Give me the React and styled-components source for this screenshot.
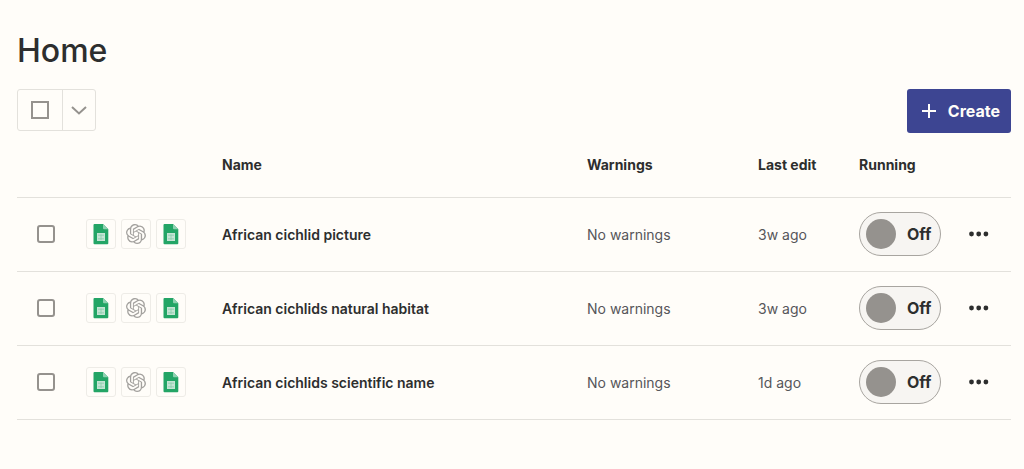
import { useState } from "react";
import styled, { createGlobalStyle } from "styled-components";
import { SiOpenai } from "react-icons/si";

const ZAP_LIST = [
  { id: 1, name: "African cichlid picture", warnings: "No warnings", lastEdit: "3w ago" },
  { id: 2, name: "African cichlids natural habitat", warnings: "No warnings", lastEdit: "3w ago" },
  { id: 3, name: "African cichlids scientific name", warnings: "No warnings", lastEdit: "1d ago" },
];

const SheetsIcon = () => (
  <svg width="16" height="22" viewBox="0 0 16 22" aria-hidden="true">
    <path d="M1.5 1H10l5.3 5.3v14a1 1 0 0 1-1 1H1.5a1 1 0 0 1-1-1V2a1 1 0 0 1 1-1z" fill="#23a566" />
    <path d="M10 1l5.3 5.3H11a1 1 0 0 1-1-1z" fill="#8ed1b1" />
    <rect x="4" y="10" width="8" height="8" fill="#c4e4d4" />
    <path d="M5 12.2h6M5 15.8h6M8 11.5v5.5" stroke="#8ccdad" strokeWidth="0.8" />
  </svg>
);

const ZapRow = ({ name, warnings, lastEdit }) => {
  const [isOn, setIsOn] = useState(false);

  return (
    <St.Row>
      <St.CheckCell>
        <St.Checkbox type="checkbox" aria-label={`Select ${name}`} />
      </St.CheckCell>
      <td>
        <St.AppList>
          <St.AppBox>
            <SheetsIcon />
          </St.AppBox>
          <St.AppBox>
            <SiOpenai size={20} />
          </St.AppBox>
          <St.AppBox>
            <SheetsIcon />
          </St.AppBox>
        </St.AppList>
      </td>
      <td>
        <St.NameLink href="#">{name}</St.NameLink>
      </td>
      <St.TextCell>{warnings}</St.TextCell>
      <St.TextCell>{lastEdit}</St.TextCell>
      <td>
        <St.Switch>
          <St.SwitchInput
            type="checkbox"
            role="switch"
            checked={isOn}
            onChange={() => setIsOn(!isOn)}
          />
          {isOn ? "On" : "Off"}
        </St.Switch>
      </td>
      <td>
        <St.MoreBtn type="button" aria-label="More actions">
          <svg width="20" height="6" viewBox="0 0 20 6" fill="#2d2e2e">
            <circle cx="2.5" cy="3" r="2.4" />
            <circle cx="9.7" cy="3" r="2.4" />
            <circle cx="16.9" cy="3" r="2.4" />
          </svg>
        </St.MoreBtn>
      </td>
    </St.Row>
  );
};

const App = () => {
  return (
    <St.Page>
      <GlobalStyle />
      <St.Title>Home</St.Title>

      <St.Toolbar>
        <St.SelectGroup>
          <St.SelectAllLabel>
            <St.SelectAll type="checkbox" aria-label="Select all" />
          </St.SelectAllLabel>
          <St.SelectMenuBtn type="button" aria-label="Selection options">
            <svg width="16" height="10" viewBox="0 0 16 10" fill="none">
              <path d="M1 2L8 8.5 15 2" stroke="#95928e" strokeWidth="2" />
            </svg>
          </St.SelectMenuBtn>
        </St.SelectGroup>
        <St.CreateBtn type="button">
          <svg width="16" height="16" viewBox="0 0 16 16" aria-hidden="true">
            <path d="M8 1v14M1 8h14" stroke="#fffdf9" strokeWidth="2" />
          </svg>
          Create
        </St.CreateBtn>
      </St.Toolbar>

      <St.Table>
        <colgroup>
          <St.Col $width={69} />
          <St.Col $width={136} />
          <col />
          <St.Col $width={171} />
          <St.Col $width={101} />
          <St.Col $width={109} />
          <St.Col $width={43} />
        </colgroup>
        <thead>
          <St.HeadRow>
            <td />
            <td />
            <th scope="col">Name</th>
            <th scope="col">Warnings</th>
            <th scope="col">Last edit</th>
            <th scope="col">Running</th>
            <td />
          </St.HeadRow>
        </thead>
        <tbody>
          {ZAP_LIST.map((zap) => (
            <ZapRow key={zap.id} {...zap} />
          ))}
        </tbody>
      </St.Table>
    </St.Page>
  );
};

export default App;

const GlobalStyle = createGlobalStyle`
  * {
    box-sizing: border-box;
  }

  body {
    margin: 0;
    background-color: #fffdf9;
    color: #2d2e2e;
    font-family: Inter, sans-serif;
  }

  button,
  input {
    margin: 0;
    font-family: inherit;
  }
`;

const St = {
  Page: styled.main`
    padding: 31px 13px 30px 17px;
  `,

  Title: styled.h1`
    margin: 0 0 18px;

    font-size: 32px;
    font-weight: 500;
    line-height: 40px;
  `,

  Toolbar: styled.div`
    display: flex;
    justify-content: space-between;
    align-items: flex-start;
  `,

  SelectGroup: styled.div`
    display: flex;

    height: 42px;

    border: 1px solid #e3e1dc;
    border-radius: 3px;
  `,

  SelectAllLabel: styled.label`
    display: flex;
    align-items: center;
    justify-content: center;

    width: 45px;

    border-right: 1px solid #e3e1dc;
  `,

  SelectAll: styled.input`
    appearance: none;
    width: 18px;
    height: 18px;

    border: 2px solid #95928e;

    &:checked {
      background-color: #95928e;
    }
  `,

  SelectMenuBtn: styled.button`
    display: flex;
    align-items: center;
    justify-content: center;

    width: 32px;
    padding: 0;

    background: none;
    border: none;
    cursor: pointer;
  `,

  CreateBtn: styled.button`
    display: flex;
    align-items: center;

    height: 44px;
    padding: 0 11px 0 14px;
    gap: 11px;

    background-color: #3d4592;
    color: #fffdf9;

    font-size: 16px;
    font-weight: 700;

    border: none;
    border-radius: 3px;
    cursor: pointer;
  `,

  Table: styled.table`
    width: 100%;

    border-collapse: collapse;
    table-layout: fixed;

    td,
    th {
      padding: 0;
      text-align: left;
      vertical-align: middle;
    }
  `,

  Col: styled.col`
    width: ${({ $width }) => $width}px;
  `,

  HeadRow: styled.tr`
    height: 64px;

    font-size: 14px;
    border-bottom: 1px solid #e3e1dc;

    th {
      font-weight: 700;
    }
  `,

  Row: styled.tr`
    height: 74px;

    border-bottom: 1px solid #e3e1dc;
  `,

  CheckCell: styled.td`
    && {
      padding-left: 20px;
    }
  `,

  Checkbox: styled.input`
    appearance: none;
    display: block;

    width: 18px;
    height: 18px;

    border: 2px solid #95928e;
    border-radius: 3px;

    &:checked {
      background-color: #95928e;
    }
  `,

  AppList: styled.div`
    display: flex;
    gap: 5px;
  `,

  AppBox: styled.span`
    display: flex;
    align-items: center;
    justify-content: center;

    width: 30px;
    height: 30px;

    color: #a3a19e;

    border: 1px solid #eeece7;
    border-radius: 3px;
  `,

  NameLink: styled.a`
    display: block;

    color: #2d2e2e;

    font-size: 14px;
    font-weight: 600;
    text-decoration: none;
  `,

  TextCell: styled.td`
    color: #56565a;

    font-size: 14px;
  `,

  Switch: styled.label`
    display: flex;
    align-items: center;

    width: 82px;
    height: 44px;
    padding-left: 6px;
    gap: 11px;

    background-color: #f7f5f2;

    font-size: 16px;
    font-weight: 700;

    border: 1px solid #a8a5a0;
    border-radius: 22px;
    cursor: pointer;
  `,

  SwitchInput: styled.input`
    appearance: none;
    width: 30px;
    height: 30px;

    background-color: #95928e;

    border-radius: 50%;

    &:checked {
      background-color: #3d4592;
    }
  `,

  MoreBtn: styled.button`
    display: flex;
    align-items: center;

    height: 30px;
    padding: 0 1px;

    background: none;
    border: none;
    cursor: pointer;
  `,
};
